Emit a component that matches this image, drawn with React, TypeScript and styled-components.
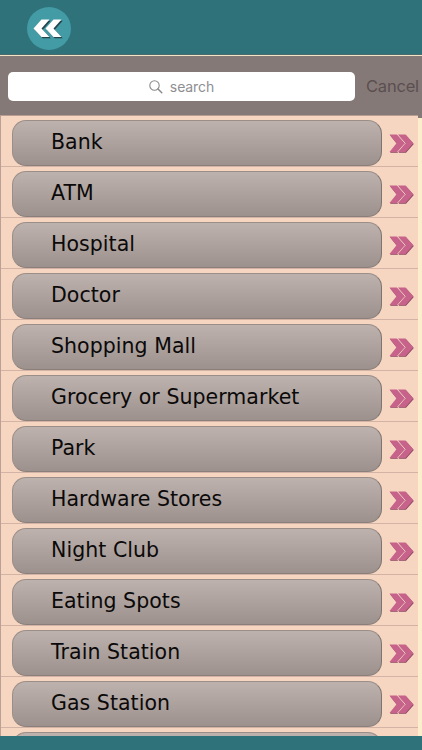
import styled, { createGlobalStyle } from 'styled-components'

const places = [
  'Bank',
  'ATM',
  'Hospital',
  'Doctor',
  'Shopping Mall',
  'Grocery or Supermarket',
  'Park',
  'Hardware Stores',
  'Night Club',
  'Eating Spots',
  'Train Station',
  'Gas Station',
]

function App() {
  return (
    <Screen>
      <GlobalStyle />
      <Header>
        <BackButton aria-label="Back">
          <BackIcon />
        </BackButton>
      </Header>
      <SearchBar>
        <SearchField>
          <SearchIcon />
          <Placeholder>search</Placeholder>
        </SearchField>
        <Cancel>Cancel</Cancel>
      </SearchBar>
      <List>
        {places.map((place) => (
          <Row key={place}>
            <Pill>
              <Label>{place}</Label>
            </Pill>
            <RowArrow />
          </Row>
        ))}
        <Row>
          <Pill />
        </Row>
      </List>
      <Footer />
    </Screen>
  )
}

function BackIcon() {
  return (
    <svg width="32" height="22" viewBox="0 0 32 22">
      <g fill="#24434b" transform="translate(1.2 1.2)">
        <path d="M8.500 1.500H16.500L8.500 10.500L16.500 19H8.500L0.500 10.500Z" />
        <path d="M20.500 1.500H28.500L20.500 10.500L28.500 19H20.500L12.500 10.500Z" />
      </g>
      <g fill="#fff">
        <path d="M8.500 1.500H16.500L8.500 10.500L16.500 19H8.500L0.500 10.500Z" />
        <path d="M20.500 1.500H28.500L20.500 10.500L28.500 19H20.500L12.500 10.500Z" />
      </g>
    </svg>
  )
}

function SearchIcon() {
  return (
    <svg width="14" height="14" viewBox="0 0 14 14" fill="none" stroke="#8b8b8d">
      <circle cx="5.500" cy="5.500" r="4.700" strokeWidth="1.100" />
      <path d="M9 9L12.800 12.800" strokeWidth="1.500" strokeLinecap="round" />
    </svg>
  )
}

function RowArrow() {
  return (
    <Arrow width="26" height="20" viewBox="0 0 26 20">
      <g fill="#8d4663" transform="translate(0.500 0.700)">
        <path d="M0.500 0.500H8L16 9.300L8 18H0.500L7.500 9.300Z" />
        <path d="M9 0.500H16.500L24.300 9.300L16.500 18H9L16.500 9.300Z" />
      </g>
      <g fill="#c7638a">
        <path d="M0.500 0.500H8L16 9.300L8 18H0.500L7.500 9.300Z" />
        <path d="M9 0.500H16.500L24.300 9.300L16.500 18H9L16.500 9.300Z" />
      </g>
      <path d="M8.400 0.500L16.200 9.300L8.400 18" fill="none" stroke="#f5cfc6" strokeWidth="0.900" />
    </Arrow>
  )
}

const GlobalStyle = createGlobalStyle`
  body {
    margin: 0;
    background: #fdeecb;
  }
`

const Screen = styled.div`
  display: flex;
  flex-direction: column;
  width: 422px;
  height: 750px;
  overflow: hidden;
  background: #fdeecb;
`

const Header = styled.header`
  flex: none;
  box-sizing: border-box;
  height: 56px;
  padding: 7px 0 0 27px;
  background: #30727a;
  border-bottom: 1px solid #f3e6c6;
  box-shadow: inset 0 -1px #4c696b;
`

const BackButton = styled.button`
  display: flex;
  align-items: center;
  justify-content: center;
  width: 44px;
  height: 43px;
  padding: 0;
  border: 0;
  border-radius: 50%;
  background: #429ba5;
`

const SearchBar = styled.div`
  flex: none;
  display: flex;
  align-items: center;
  box-sizing: border-box;
  height: 62px;
  padding: 0 0 1px 8px;
  background: #857977;
`

const SearchField = styled.div`
  flex: none;
  display: flex;
  align-items: center;
  justify-content: center;
  gap: 7px;
  width: 347px;
  height: 29px;
  border-radius: 5px;
  background: #fff;
`

const Placeholder = styled.span`
  font: 14px Inter, sans-serif;
  letter-spacing: -0.100px;
  color: #8e8e93;
`

const Cancel = styled.span`
  margin-left: 11px;
  padding-bottom: 1px;
  font: 16.500px Inter, sans-serif;
  letter-spacing: -0.200px;
  color: #5b4f50;
`

const List = styled.div`
  flex: 1;
  min-height: 0;
  width: 417px;
  margin-top: -3px;
  overflow: hidden;
  border-top: 1px solid #b79c92;
  border-left: 1px solid #bba095;
  background: #f7d6c1;
`

const Row = styled.div`
  display: flex;
  align-items: center;
  box-sizing: border-box;
  height: 50.970px;
  padding: 4px 0 0 10.500px;
  border-bottom: 1px solid #d2b3a5;
`

const Pill = styled.div`
  flex: none;
  box-sizing: border-box;
  width: 370.500px;
  height: 46px;
  margin-right: 7px;
  padding: 0 0 2px 38.500px;
  display: flex;
  align-items: center;
  border: 1px solid #9b8e89;
  border-right-color: #7e7471;
  border-bottom-color: #8a7f7b;
  border-radius: 14px;
  background: linear-gradient(#bdb2ad, #9c918c);
`

const Label = styled.span`
  font: 20.500px 'DejaVu Sans', sans-serif;
  letter-spacing: 0.050px;
  color: #0b0909;
  white-space: nowrap;
`

const Arrow = styled.svg`
  flex: none;
  margin-top: 3px;
`

const Footer = styled.footer`
  flex: none;
  height: 14px;
  background: #30727a;
`

export default App
